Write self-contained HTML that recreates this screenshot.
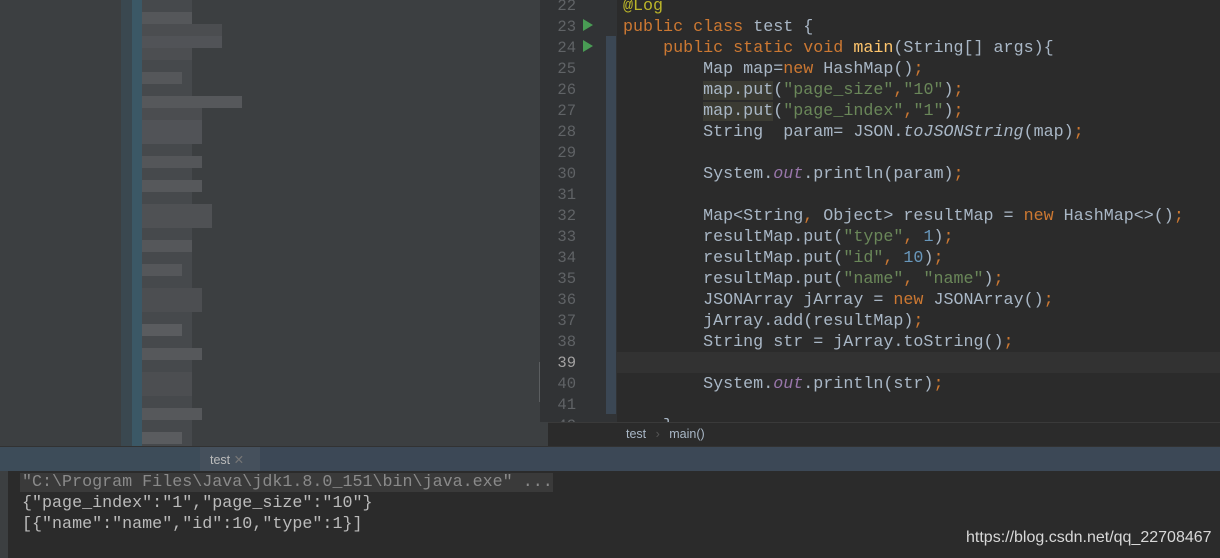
<!DOCTYPE html>
<html><head><meta charset="utf-8"><style>
*{margin:0;padding:0;box-sizing:border-box}
body{width:1220px;height:558px;overflow:hidden;background:#2b2b2b;position:relative;font-family:"Liberation Mono",monospace}
.abs{position:absolute}
#left{left:0;top:0;width:540px;height:446px;background:#3c3f41}
#gut{left:540px;top:0;width:77px;height:422px;background:#313335}
#ed{left:617px;top:0;width:603px;height:422px;background:#2b2b2b}
.ln{position:absolute;left:540px;width:36px;text-align:right;color:#606366;font-size:15.5px}
.code{position:absolute;left:623px;white-space:pre;color:#a9b7c6;font-size:16.7px;line-height:21px}
.k{color:#cc7832}.s{color:#6a8759}.n{color:#6897bb}.f{color:#9876aa;font-style:italic}.i{font-style:italic}.a{color:#bbb529}
.hl{background:#3b3b33}
.px{position:absolute}
</style></head><body>
<div id="left" class="abs"></div>
<div class="abs" style="left:121px;top:0;width:22px;height:446px;background:#3a4850"></div>
<div class="abs" style="left:132px;top:0;width:10px;height:446px;background:#3b5866"></div>
<div class="abs" style="left:142px;top:0;width:50px;height:446px;background:#46494c"></div>
<div class="px" style="left:142px;top:12px;width:50px;height:12px;background:#55575a"></div>
<div class="px" style="left:142px;top:24px;width:80px;height:12px;background:#4b4d50"></div>
<div class="px" style="left:142px;top:36px;width:80px;height:12px;background:#515357"></div>
<div class="px" style="left:142px;top:48px;width:50px;height:12px;background:#4c4e51"></div>
<div class="px" style="left:142px;top:72px;width:40px;height:12px;background:#55575a"></div>
<div class="px" style="left:142px;top:96px;width:100px;height:12px;background:#56585b"></div>
<div class="px" style="left:142px;top:108px;width:60px;height:12px;background:#4b4d50"></div>
<div class="px" style="left:142px;top:120px;width:60px;height:24px;background:#515357"></div>
<div class="px" style="left:142px;top:156px;width:60px;height:12px;background:#545659"></div>
<div class="px" style="left:142px;top:180px;width:60px;height:12px;background:#56585b"></div>
<div class="px" style="left:142px;top:204px;width:70px;height:24px;background:#4f5154"></div>
<div class="px" style="left:142px;top:240px;width:50px;height:12px;background:#55575a"></div>
<div class="px" style="left:142px;top:264px;width:40px;height:12px;background:#55575a"></div>
<div class="px" style="left:142px;top:288px;width:60px;height:24px;background:#4c4e51"></div>
<div class="px" style="left:142px;top:324px;width:40px;height:12px;background:#5a5c5f"></div>
<div class="px" style="left:142px;top:348px;width:60px;height:12px;background:#56585b"></div>
<div class="px" style="left:142px;top:372px;width:50px;height:24px;background:#4c4e51"></div>
<div class="px" style="left:142px;top:408px;width:60px;height:12px;background:#56585b"></div>
<div class="px" style="left:142px;top:432px;width:40px;height:12px;background:#5a5c5f"></div>
<div class="abs" style="left:539px;top:362px;width:7px;height:40px;background:#5b5e60"></div>
<div id="gut" class="abs"></div>
<div class="abs" style="left:606px;top:36px;width:10px;height:378px;background:#3b4754"></div>
<div id="ed" class="abs"></div>
<div class="abs" style="left:617px;top:352px;width:603px;height:21px;background:#323232"></div>
<div class="abs" style="left:583px;top:19px;width:0;height:0;border-top:6px solid transparent;border-bottom:6px solid transparent;border-left:10px solid #499c54"></div>
<div class="abs" style="left:583px;top:40px;width:0;height:0;border-top:6px solid transparent;border-bottom:6px solid transparent;border-left:10px solid #499c54"></div>
<div class="code" style="top:-4px"><span class="a">@Log</span>
<span class="k">public class </span>test {
    <span class="k">public static void </span><span style="color:#ffc66d">main</span>(String[] args){
        Map map=<span class="k">new </span>HashMap()<span class="k">;</span>
        <span class="hl">map.put</span>(<span class="s">"page_size"</span><span class="k">,</span><span class="s">"10"</span>)<span class="k">;</span>
        <span class="hl">map.put</span>(<span class="s">"page_index"</span><span class="k">,</span><span class="s">"1"</span>)<span class="k">;</span>
        String  param= JSON.<span class="i">toJSONString</span>(map)<span class="k">;</span>

        System.<span class="f">out</span>.println(param)<span class="k">;</span>

        Map&lt;String<span class="k">, </span>Object&gt; resultMap = <span class="k">new </span>HashMap&lt;&gt;()<span class="k">;</span>
        resultMap.put(<span class="s">"type"</span><span class="k">, </span><span class="n">1</span>)<span class="k">;</span>
        resultMap.put(<span class="s">"id"</span><span class="k">, </span><span class="n">10</span>)<span class="k">;</span>
        resultMap.put(<span class="s">"name"</span><span class="k">, </span><span class="s">"name"</span>)<span class="k">;</span>
        JSONArray jArray = <span class="k">new </span>JSONArray()<span class="k">;</span>
        jArray.add(resultMap)<span class="k">;</span>
        String str = jArray.toString()<span class="k">;</span>

        System.<span class="f">out</span>.println(str)<span class="k">;</span>

    }</div>
<div class="ln" style="top:-4px;line-height:21px;white-space:pre">22
23
24
25
26
27
28
29
30
31
32
33
34
35
36
37
38
<span style="color:#a4a3a3">39</span>
40
41
42</div>
<div class="abs" style="left:540px;top:422px;width:680px;height:24px;background:#2b2b2b;border-top:1px solid #3a3a3a"></div>
<div class="abs" style="left:540px;top:422px;width:8px;height:24px;background:#3c3f41"></div>
<div class="abs" style="left:626px;top:427px;font-family:'Liberation Sans',sans-serif;font-size:12.5px;color:#a9b7c6">test <span style="color:#555;margin:0 6px">›</span> main()</div>
<div class="abs" style="left:0;top:446px;width:1220px;height:25px;background:#3c4856;border-top:1px solid #323232"></div>
<div class="abs" style="left:0;top:447px;width:200px;height:24px;background:#3d4c59"></div>
<div class="abs" style="left:200px;top:447px;width:60px;height:24px;background:#45505c"></div>
<div class="abs" style="left:210px;top:452px;font-family:'Liberation Sans',sans-serif;font-size:12.5px;color:#bbbbbb">test <span style="color:#777">✕</span></div>
<div class="abs" style="left:0;top:471px;width:8px;height:87px;background:#3c3f41"></div>
<div class="abs" style="left:20px;top:473px;width:533px;height:19px;background:#3a3a3a"></div>
<div class="code" style="left:22px;top:472px;font-size:16.7px;line-height:21px"><span style="color:#8a8a8a">"C:\Program Files\Java\jdk1.8.0_151\bin\java.exe" ...</span>
<span style="color:#bbbbbb">{"page_index":"1","page_size":"10"}</span>
<span style="color:#bbbbbb">[{"name":"name","id":10,"type":1}]</span></div>
<div class="abs" style="left:966px;top:529px;font-family:'Liberation Sans',sans-serif;font-size:16px;color:#d8d8d8">https://blog.csdn.net/qq_22708467</div>
</body></html>
